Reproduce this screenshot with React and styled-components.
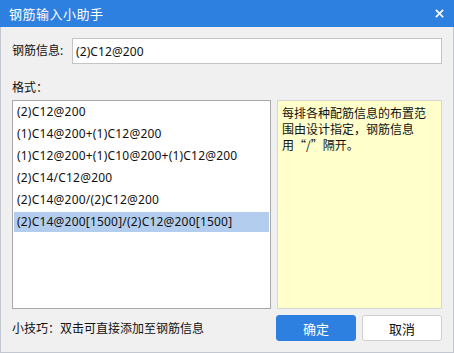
import styled, { createGlobalStyle } from "styled-components";

const GlobalStyle = createGlobalStyle`
    html, body {
        margin: 0;
        padding: 0;
        background: #f0f0f0;
    }
    * {
        box-sizing: border-box;
    }
`;

const Ventana = styled.div`
    width: 454px;
    height: 353px;
    display: flex;
    flex-direction: column;
    background-color: #f0f0f0;
    border: 1px solid #c3c8d0;
    border-top: none;
    font-family: "Noto Sans", "Noto Sans CJK SC", sans-serif;
    font-size: 12px;
    color: #111;
`;
const BarraTitulo = styled.div`
    height: 27px;
    margin: 0 -1px;
    padding: 0 10px 0 9px;
    display: flex;
    align-items: center;
    justify-content: space-between;
    background-color: #2d80df;
    color: #fff;
    font-size: 13px;
    letter-spacing: 0.5px;
`;
const BotonCerrar = styled.svg`
    width: 9px;
    height: 9px;
`;
const Cuerpo = styled.div`
    flex: 1;
    display: flex;
    flex-direction: column;
    padding: 11px 11px 0 11px;
`;
const Fila = styled.div`
    display: flex;
    align-items: center;
`;
const Etiqueta = styled.span`
    width: 60px;
    line-height: 16px;
    flex-shrink: 0;
`;
const Entrada = styled.input`
    flex: 1;
    height: 26px;
    padding: 0 3px;
    border: 1px solid #c4c4c4;
    background: #fff;
    font-family: inherit;
    font-size: 12px;
    letter-spacing: 0.1px;
    color: #111;
    outline: none;
`;
const Subtitulo = styled.div`
    margin-top: 15px;
    line-height: 16px;
    font-family: "Noto Sans CJK SC", sans-serif;
`;
const Paneles = styled.div`
    margin-top: 5px;
    height: 209px;
    display: grid;
    grid-template-columns: 259px 165px;
    gap: 6px;
`;
const Lista = styled.div`
    border: 1px solid #a9a9a9;
    background: #fff;
    padding: 1px 1px 0 1px;
    letter-spacing: 0.2px;
`;
const Elemento = styled.div`
    height: 20px;
    margin-bottom: 2px;
    padding-left: 3px;
    line-height: 20px;
    white-space: nowrap;
    background-color: ${props => props.selected ? '#b3cdee' : 'transparent'};
`;
const Nota = styled.div`
    border: 1px solid #d6d6d6;
    background: #ffffcc;
    padding: 4px 8px 0 4px;
    line-height: 16px;
    font-family: "Noto Sans CJK SC", sans-serif;
`;
const Pie = styled.div`
    margin-top: 6px;
    display: flex;
    align-items: center;
`;
const Consejo = styled.span`
    flex: 1;
    line-height: 16px;
    font-family: "Noto Sans CJK SC", sans-serif;
`;
const Boton = styled.button`
    width: 80px;
    height: 26px;
    margin-left: ${props => props.first ? '0' : '6px'};
    border-radius: 3px;
    border: 1px solid ${props => props.primary ? '#2d80df' : '#cfcfcf'};
    background-color: ${props => props.primary ? '#2d80df' : '#fff'};
    color: ${props => props.primary ? '#fff' : '#111'};
    font-family: inherit;
    font-size: 13px;
    padding: 0;
`;

const FORMATOS = [
    '(2)C12@200',
    '(1)C14@200+(1)C12@200',
    '(1)C12@200+(1)C10@200+(1)C12@200',
    '(2)C14/C12@200',
    '(2)C14@200/(2)C12@200',
    '(2)C14@200[1500]/(2)C12@200[1500]',
];

export default function App() {
    return (
        <>
            <GlobalStyle />
            <Ventana>
                <BarraTitulo>
                    <span>钢筋输入小助手</span>
                    <BotonCerrar viewBox="0 0 10 10">
                        <path d="M1 1 L9 9 M9 1 L1 9" stroke="#fff" strokeWidth="1.8" />
                    </BotonCerrar>
                </BarraTitulo>
                <Cuerpo>
                    <Fila>
                        <Etiqueta>钢筋信息:</Etiqueta>
                        <Entrada defaultValue="(2)C12@200" />
                    </Fila>
                    <Subtitulo>格式：</Subtitulo>
                    <Paneles>
                        <Lista>
                            {FORMATOS.map((f, i) => (
                                <Elemento key={i} selected={i === FORMATOS.length - 1}>{f}</Elemento>
                            ))}
                        </Lista>
                        <Nota>每排各种配筋信息的布置范围由设计指定，钢筋信息用“/”隔开。</Nota>
                    </Paneles>
                    <Pie>
                        <Consejo>小技巧：双击可直接添加至钢筋信息</Consejo>
                        <Boton primary first>确定</Boton>
                        <Boton>取消</Boton>
                    </Pie>
                </Cuerpo>
            </Ventana>
        </>
    );
}
